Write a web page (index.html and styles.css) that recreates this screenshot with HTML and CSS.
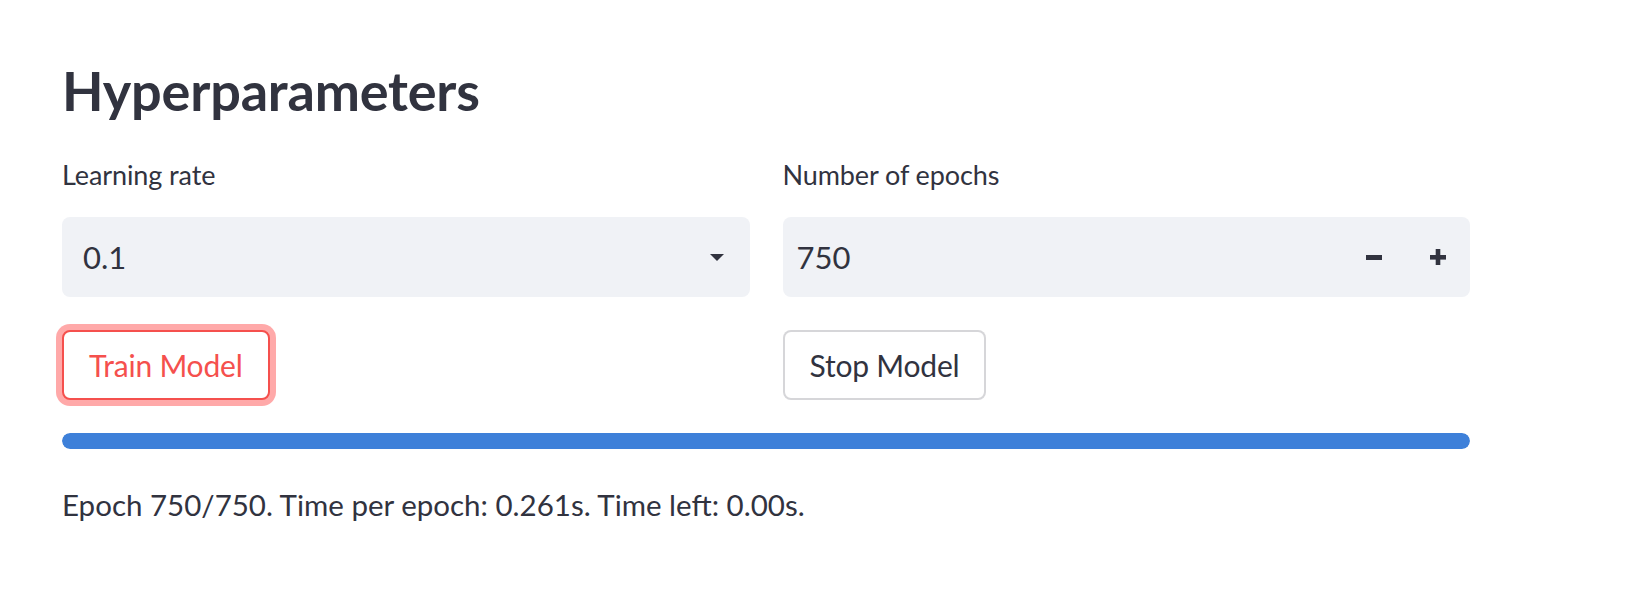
FILE: index.html
```html
<!DOCTYPE html>
<html lang="en">
<head>
<meta charset="utf-8">
<title>Hyperparameters</title>
<link rel="stylesheet" href="styles.css">
</head>
<body>
<main class="block">
  <h2 class="title">Hyperparameters</h2>
  <div class="cols">
    <div class="field">
      <label class="label">Learning rate</label>
      <div class="select">
        <span class="value">0.1</span>
        <svg class="caret" width="14" height="7" viewBox="0 0 14 7"><path d="M0 0 H14 L7 7 Z" fill="#31333f"/></svg>
      </div>
    </div>
    <div class="field">
      <label class="label">Number of epochs</label>
      <div class="number">
        <span class="num-value">750</span>
        <span class="step">
          <svg width="16" height="16" viewBox="0 0 16 16"><rect x="0" y="6" width="16" height="5" fill="#31333f"/></svg>
        </span>
        <span class="step">
          <svg width="16" height="16" viewBox="0 0 16 16"><rect x="0" y="6" width="16" height="4.6" fill="#31333f"/><rect x="5.7" y="0" width="4.6" height="16" fill="#31333f"/></svg>
        </span>
      </div>
    </div>
    <div class="btn-cell"><button class="btn btn-focus">Train Model</button></div>
    <div class="btn-cell"><button class="btn">Stop Model</button></div>
  </div>
  <div class="progress"><div class="bar" style="width:100%"></div></div>
  <p class="status">Epoch 750/750. Time per epoch: 0.261s. Time left: 0.00s.</p>
</main>
</body>
</html>
```
FILE: styles.css
```css
html, body {
  margin: 0;
  padding: 0;
  background: #ffffff;
}
body {
  font-family: Lato, "Source Sans Pro", sans-serif;
  color: #31333f;
}
.block {
  width: 1408px;
  padding: 59px 0 0 62px;
}
.title {
  margin: 0 0 35px 0;
  font-size: 54px;
  font-weight: 700;
  line-height: 1.2;
  letter-spacing: -0.2px;
}
.cols {
  display: grid;
  grid-template-columns: 1fr 1fr;
  column-gap: 33px;
  row-gap: 33px;
}
.field {
  display: flex;
  flex-direction: column;
}
.label {
  font-size: 27px;
  line-height: 32px;
  height: 32px;
  margin-bottom: 26px;
  letter-spacing: -0.1px;
}
.select, .number {
  height: 80px;
  background: #f0f2f6;
  border-radius: 8px;
  display: flex;
  align-items: center;
  box-sizing: border-box;
  font-size: 31px;
}
.select {
  padding: 0 26px 0 21px;
}
.value { flex: 1; }
.caret { display: block; margin-top: 2px; }
.number {
  padding-left: 14px;
}
.num-value { flex: 1; }
.step {
  width: 64px;
  height: 80px;
  display: flex;
  align-items: center;
  justify-content: center;
}
.step svg { display: block; }
.btn-cell { display: flex; }
.btn {
  height: 70px;
  box-sizing: border-box;
  padding: 0 25px;
  background: #ffffff;
  border: 2px solid rgba(49, 51, 63, 0.2);
  border-radius: 8px;
  font-family: inherit;
  font-size: 30px;
  letter-spacing: -0.2px;
  color: #31333f;
  cursor: pointer;
}
.btn-focus {
  border-color: #f5504d;
  color: #f5504d;
  box-shadow: 0 0 0 6px rgba(255, 75, 75, 0.48);
}
.progress {
  margin-top: 33px;
  height: 16px;
  border-radius: 8px;
  background: #f0f2f6;
  overflow: hidden;
}
.bar {
  height: 100%;
  background: #3e80d9;
  border-radius: 8px;
}
.status {
  margin: 32px 0 0 0;
  font-size: 29.5px;
  line-height: 1.6;
}
```
